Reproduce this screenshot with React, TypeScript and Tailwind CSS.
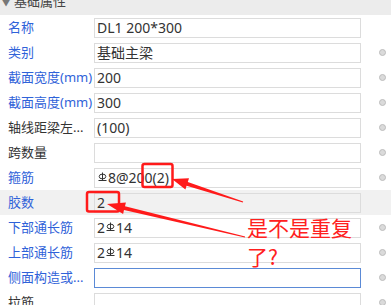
import React from "react";

type Row = {
    label: string;
    value?: React.ReactNode;
    blue: boolean;
    dot: boolean;
    active?: boolean;
    selected?: boolean;
};

// 钢筋等级符号 (HRB400)
function Grade() {
    return (
        <svg width="9" height="11" viewBox="0 0 9 11" className="inline-block align-[2px] mx-[1px]">
            <line x1="4.5" y1="0.5" x2="4.5" y2="8.5" stroke="#333" strokeWidth="1" />
            <ellipse cx="4.5" cy="4.5" rx="3.3" ry="2.4" fill="none" stroke="#333" strokeWidth="1" />
            <line x1="0.5" y1="8.5" x2="8.5" y2="8.5" stroke="#333" strokeWidth="1" />
        </svg>
    );
}

const rows: Row[] = [
    { label: "名称", value: "DL1 200*300", blue: true, dot: false },
    { label: "类别", value: "基础主梁", blue: true, dot: true },
    { label: "截面宽度(mm)", value: "200", blue: true, dot: true },
    { label: "截面高度(mm)", value: "300", blue: true, dot: true },
    { label: "轴线距梁左...", value: "(100)", blue: false, dot: true },
    { label: "跨数量", value: "", blue: false, dot: true },
    { label: "箍筋", value: <><Grade />8@200(2)</>, blue: true, dot: true },
    { label: "胶数", value: "2", blue: true, dot: false, selected: true },
    { label: "下部通长筋", value: <>2<Grade />14</>, blue: true, dot: true },
    { label: "上部通长筋", value: <>2<Grade />14</>, blue: true, dot: true },
    { label: "侧面构造或...", value: "", blue: true, dot: true, active: true },
    { label: "拉筋", value: "", blue: false, dot: true },
];

export default function App() {
    return (
        <div
            className="relative w-[391px] h-[305px] overflow-hidden bg-white text-[13px]"
            style={{ fontFamily: '"Noto Sans", "Noto Sans CJK SC", sans-serif' }}
        >
            <div className="h-[15px] bg-[#ececec] overflow-hidden flex items-start">
                <span className="text-[8px] text-[#777] ml-[2px] -mt-[3px]">▼</span>
                <span className="text-[13px] leading-[17px] text-[#444] ml-[4px] -mt-[7px]">基础属性</span>
            </div>

            {rows.map((r) => (
                <div
                    key={r.label}
                    className={`grid grid-cols-[94px_267px_30px] h-[25px] items-center ${r.selected ? "bg-[#f1f1f1]" : ""}`}
                >
                    <div className={`pl-[8px] whitespace-nowrap leading-none ${r.blue ? "text-[#2f62d9]" : "text-[#333]"}`}>
                        {r.label}
                    </div>
                    <div
                        className={`h-[20px] border flex items-center pl-[2px] text-[14px] text-[#333] leading-none whitespace-nowrap ${
                            r.active ? "border-[#5b8ad6]" : "border-[#dcdcdc]"
                        } ${r.selected ? "bg-transparent" : "bg-white"}`}
                    >
                        {r.value}
                    </div>
                    <div className="flex">
                        {r.dot && <span className="ml-[18px] w-[7px] h-[7px] rounded-full bg-[#dadada] border border-[#bdbdbd]" />}
                    </div>
                </div>
            ))}

            <svg className="absolute inset-0 pointer-events-none" width="391" height="305" viewBox="0 0 391 305">
                <rect x="142.5" y="164" width="30" height="23" rx="2" fill="none" stroke="#ff1a1a" strokeWidth="2.5" />
                <rect x="87" y="192" width="32" height="19.5" rx="2" fill="none" stroke="#ff1a1a" strokeWidth="2.5" />
                <polygon
                    points="172,179 189,178.2 187.8,182 243.2,201.5 242.8,202.5 186.6,185.8 185.4,189.6"
                    fill="#ff1a1a"
                />
                <polygon
                    points="107,204 125.9,202.4 125,206.3 245.1,236.4 244.9,237.6 124,210.1 123.1,214"
                    fill="#ff1a1a"
                />
            </svg>

            <div className="absolute left-[247px] top-[213px] text-[21px] leading-[29px] text-[#ff2020] pointer-events-none"
                style={{ fontFamily: '"Noto Sans CJK SC", sans-serif' }}>
                <div>是不是重复</div>
                <div>了?</div>
            </div>
        </div>
    );
}
